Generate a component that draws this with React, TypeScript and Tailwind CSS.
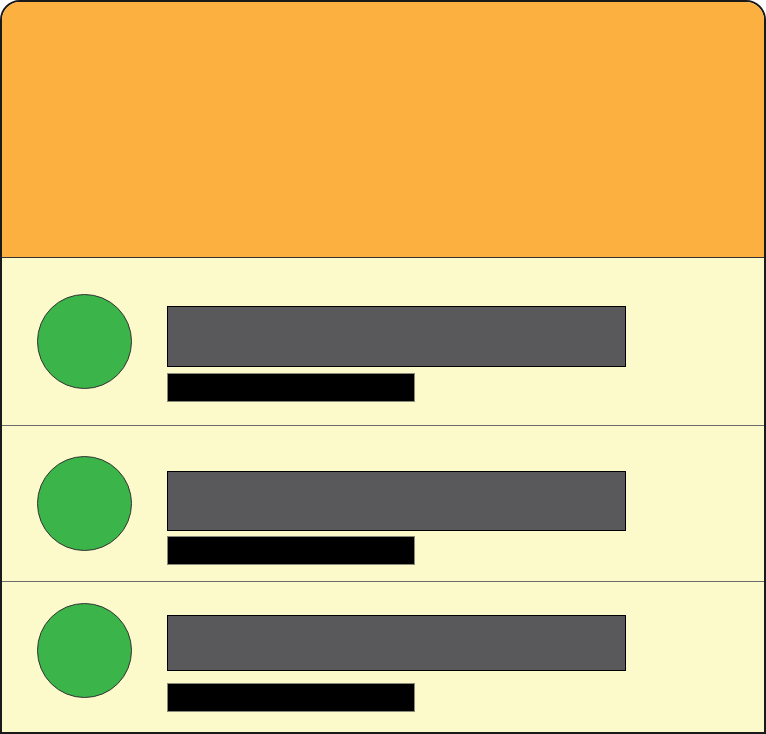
import React from 'react';

type Row = {
  rowClass: string;
  circleClass: string;
  textClass: string;
  titleClass: string;
};

const ROWS: Row[] = [
  {
    rowClass: 'h-[168px] border-b border-[#6b6b6b]',
    circleClass: 'mt-[36px]',
    textClass: 'mt-[48px] gap-[6px]',
    titleClass: 'h-[61px]',
  },
  {
    rowClass: 'h-[156px] border-b border-[#6b6b6b]',
    circleClass: 'mt-[30px]',
    textClass: 'mt-[45px] gap-[5px]',
    titleClass: 'h-[60px]',
  },
  {
    rowClass: 'h-[150px]',
    circleClass: 'mt-[21px]',
    textClass: 'mt-[33px] gap-[12px]',
    titleClass: 'h-[56px]',
  },
];

function ListRow({ row }: { row: Row }) {
  return (
    <div className={`flex items-start bg-[#fcf9cb] ${row.rowClass}`}>
      <div className={`ml-[35px] w-[95px] h-[95px] shrink-0 rounded-full bg-[#3bb54a] border border-[#333] ${row.circleClass}`} />
      <div className={`ml-[35px] flex flex-col ${row.textClass}`}>
        <div className={`w-[459px] bg-[#59595b] border border-black ${row.titleClass}`} />
        <div className="w-[248px] h-[29px] bg-black border border-[#8a8a7a]" />
      </div>
    </div>
  );
}

export default function App() {
  return (
    <div className="w-[766px] h-[734px] bg-white">
      <div className="w-[766px] h-[734px] flex flex-col border-2 border-[#1a1a1a] rounded-t-[20px] overflow-hidden">
        <div className="h-[256px] shrink-0 bg-[#fbb040] border-b border-[#333]" />
        {ROWS.map((row, i) => (
          <ListRow key={i} row={row} />
        ))}
      </div>
    </div>
  );
}
